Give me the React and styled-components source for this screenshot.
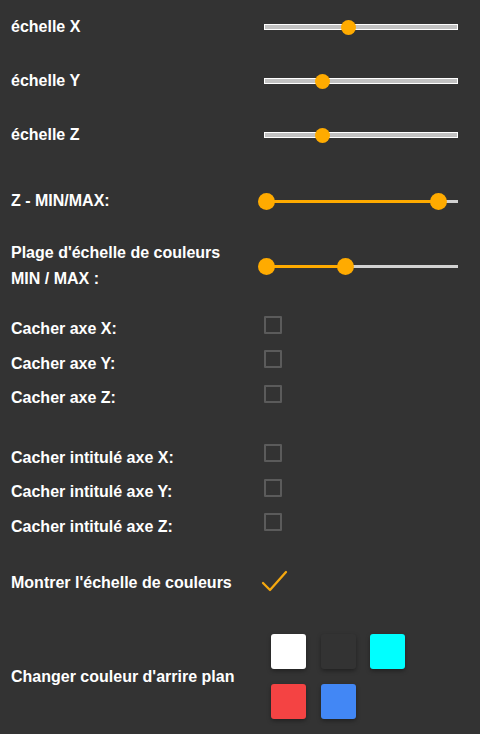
import React from "react";
import styled, { createGlobalStyle } from "styled-components";

const Global = createGlobalStyle`
  html, body { margin: 0; padding: 0; background: #333333; }
  #root { min-height: 734px; }
`;

const Page = styled.div`
  display: flex;
  flex-direction: column;
  padding: 0 22px 0 11px;
  background: #333333;
  font-family: "Liberation Sans", Arial, Helvetica, sans-serif;
  font-size: 16px;
  font-weight: 700;
  color: #ffffff;
  min-height: 734px;
  box-sizing: border-box;
`;

const Row = styled.div`
  display: grid;
  grid-template-columns: 240px 1fr;
  column-gap: 13px;
  align-items: center;
  height: ${(p) => p.$h}px;
  margin-top: ${(p) => p.$mt || 0}px;
`;

const Label = styled.div`
  line-height: 26px;
`;

const Control = styled.div`
  position: relative;
  width: 194px;
  height: 100%;
  display: flex;
  align-items: center;
`;

const Track = styled.div`
  position: relative;
  width: 194px;
  height: 6px;
  box-sizing: border-box;
  border: 1px solid #ffffff;
  background: #c2c2c2;
`;

const Thumb = styled.div`
  position: absolute;
  top: 50%;
  width: ${(p) => p.$size}px;
  height: ${(p) => p.$size}px;
  margin-left: ${(p) => -p.$size / 2}px;
  margin-top: ${(p) => -p.$size / 2}px;
  border-radius: 50%;
  background: #ffab00;
`;

const RangeTrack = styled.div`
  position: relative;
  width: 194px;
  height: 3px;
  background: #d2d2d2;
`;

const RangeFill = styled.div`
  position: absolute;
  top: 0;
  height: 100%;
  background: #ffab00;
`;

const Box = styled.div`
  align-self: start;
  margin-top: 4px;
  width: 18px;
  height: 18px;
  box-sizing: border-box;
  border: 2px solid #5b5b5b;
  border-radius: 1px;
`;

const Check = styled.svg`
  margin-left: -4px;
  margin-top: -4px;
  display: block;
`;

const Swatches = styled.div`
  display: grid;
  grid-template-columns: repeat(3, 35px);
  grid-auto-rows: 35px;
  column-gap: 14.5px;
  row-gap: 15px;
  padding-left: 7px;
`;

const Swatch = styled.div`
  width: 35px;
  height: 35px;
  border-radius: 3px;
  background: ${(p) => p.$color};
  box-shadow: 0 2px 4px rgba(0, 0, 0, 0.35);
`;

function Slider({ value }) {
  const left = 7.5 + value * 179;
  return (
    <Control>
      <Track>
        <Thumb $size={15} style={{ left: left - 1 }} />
      </Track>
    </Control>
  );
}

function RangeSlider({ low, high }) {
  const a = 2 + low * 190;
  const b = 2 + high * 190;
  return (
    <Control>
      <RangeTrack>
        <RangeFill style={{ left: a, width: b - a }} />
        <Thumb $size={17} style={{ left: a }} />
        <Thumb $size={17} style={{ left: b }} />
      </RangeTrack>
    </Control>
  );
}

const scales = [
  { label: "échelle X", value: 0.43 },
  { label: "échelle Y", value: 0.283 },
  { label: "échelle Z", value: 0.283 },
];

const axes = ["Cacher axe X:", "Cacher axe Y:", "Cacher axe Z:"];
const titles = [
  "Cacher intitulé axe X:",
  "Cacher intitulé axe Y:",
  "Cacher intitulé axe Z:",
];
const colors = ["#ffffff", "#333333", "#00ffff", "#f44343", "#4287f5"];

export default function App() {
  return (
    <>
      <Global />
      <Page>
        {scales.map((s) => (
          <Row key={s.label} $h={54}>
            <Label>{s.label}</Label>
            <Slider value={s.value} />
          </Row>
        ))}
        <Row $h={78}>
          <Label>Z - MIN/MAX:</Label>
          <RangeSlider low={0} high={0.907} />
        </Row>
        <Row $h={46}>
          <Label>Plage d'échelle de couleurs MIN / MAX :</Label>
          <RangeSlider low={0} high={0.417} />
        </Row>
        {axes.map((t, i) => (
          <Row key={t} $h={34.5} $mt={i === 0 ? 25.75 : 0}>
            <Label>{t}</Label>
            <Box />
          </Row>
        ))}
        {titles.map((t, i) => (
          <Row key={t} $h={34.5} $mt={i === 0 ? 25 : 0}>
            <Label>{t}</Label>
            <Box />
          </Row>
        ))}
        <Row $h={44} $mt={17.25}>
          <Label>Montrer l'échelle de couleurs</Label>
          <Check width="28" height="24" viewBox="0 0 28 24">
            <polyline
              points="3,14 10,21 26,3"
              fill="none"
              stroke="#f5a80f"
              strokeWidth="2.3"
              strokeLinecap="round"
              strokeLinejoin="round"
            />
          </Check>
        </Row>
        <Row $h={85} $mt={29}>
          <Label>Changer couleur d'arrire plan</Label>
          <Swatches>
            {colors.map((c) => (
              <Swatch key={c} $color={c} />
            ))}
          </Swatches>
        </Row>
      </Page>
    </>
  );
}
